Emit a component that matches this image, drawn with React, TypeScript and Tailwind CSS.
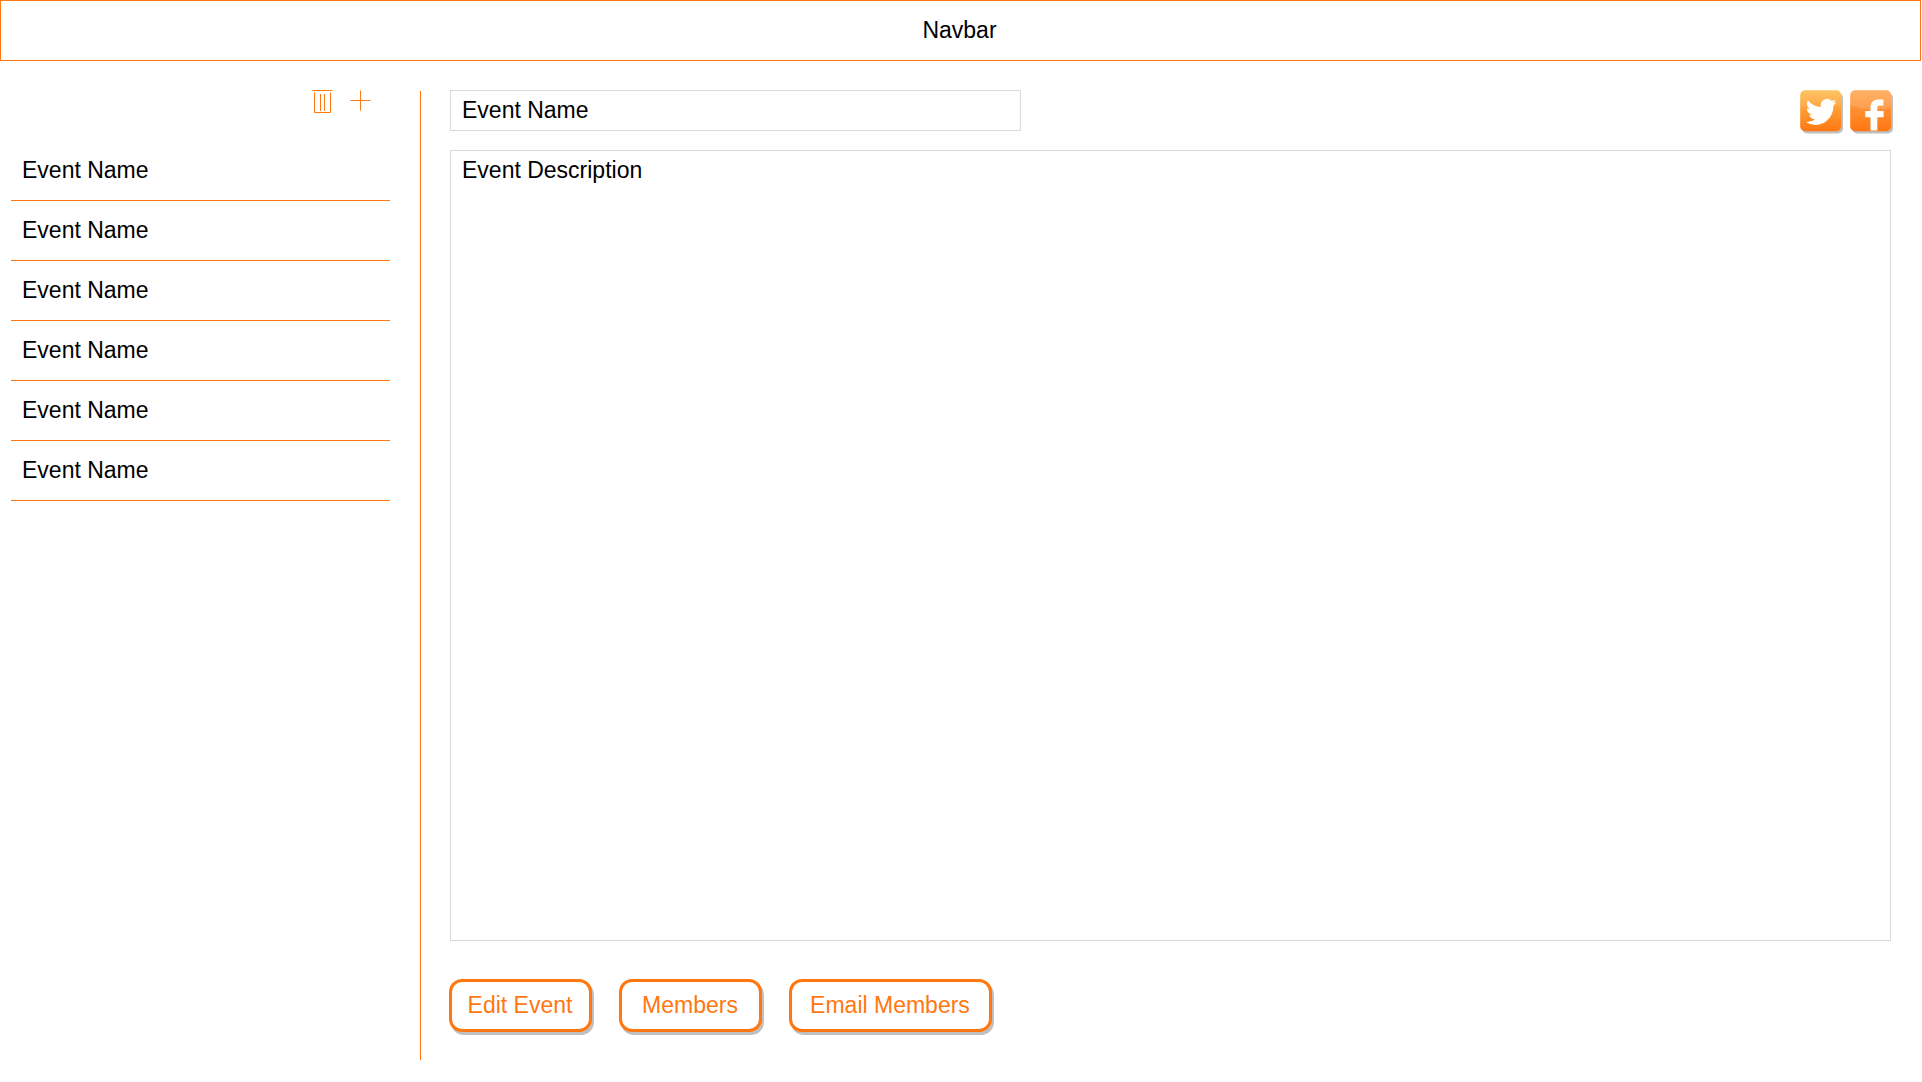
import React from "react";

const events = ["Event Name", "Event Name", "Event Name", "Event Name", "Event Name", "Event Name"];

function TrashIcon() {
  return (
    <svg width="22" height="24" viewBox="0 0 22 24" fill="none" stroke="#ff7711" strokeWidth="1">
      <path d="M0.5 0.5H20.5M2.5 2.5V22.5H18.5V2.5M8.5 4V21M12.5 4V21" />
    </svg>
  );
}

function PlusIcon() {
  return (
    <svg width="21" height="21" viewBox="0 0 21 21" fill="none" stroke="#ff7711" strokeWidth="1">
      <path d="M0.5 10.5H20.5M10.5 0.5V20.5" />
    </svg>
  );
}

function TwitterIcon() {
  return (
    <svg width="44" height="44" viewBox="0 0 44 44">
      <defs>
        <linearGradient id="tw" x1="0" y1="0" x2="0" y2="1">
          <stop offset="0" stopColor="#ffbf55" />
          <stop offset="1" stopColor="#ff7711" />
        </linearGradient>
      </defs>
      <rect x="2" y="3" width="41" height="40.5" rx="5" fill="#c0c0c0" />
      <rect x="0.2" y="0.2" width="41" height="41" rx="5" fill="url(#tw)" />
      <path d="M0.2 16Q20 23 41.2 15V5Q41 0.2 36 0.2H5Q0.2 0.2 0.2 5Z" fill="#fff" opacity="0.08" />
      <g transform="translate(5.8 6) scale(1.28 1.33)">
        <path
          fill="#fff"
          d="M23.953 4.57a10 10 0 0 1-2.825.775 4.958 4.958 0 0 0 2.163-2.723 9.99 9.99 0 0 1-3.127 1.184 4.92 4.92 0 0 0-8.384 4.482C7.69 8.095 4.067 6.13 1.64 3.162a4.822 4.822 0 0 0-.666 2.475c0 1.71.87 3.213 2.188 4.096a4.904 4.904 0 0 1-2.228-.616v.06a4.923 4.923 0 0 0 3.946 4.827 4.996 4.996 0 0 1-2.212.085 4.936 4.936 0 0 0 4.604 3.417 9.867 9.867 0 0 1-6.102 2.105c-.39 0-.779-.023-1.17-.067a13.995 13.995 0 0 0 7.557 2.209c9.053 0 13.998-7.496 13.998-13.985 0-.21 0-.42-.015-.63A9.935 9.935 0 0 0 24 4.59z"
        />
      </g>
    </svg>
  );
}

function FacebookIcon() {
  return (
    <svg width="44" height="44" viewBox="0 0 44 44">
      <defs>
        <linearGradient id="fb" x1="0" y1="0" x2="0" y2="1">
          <stop offset="0" stopColor="#ffa44f" />
          <stop offset="1" stopColor="#ff7711" />
        </linearGradient>
      </defs>
      <rect x="2" y="3" width="41" height="40.5" rx="5" fill="#c0c0c0" />
      <rect x="0.2" y="0.2" width="41" height="41" rx="5" fill="url(#fb)" />
      <path d="M0.2 15Q20 23 41.2 17V5Q41 0.2 36 0.2H5Q0.2 0.2 0.2 5Z" fill="#fff" opacity="0.14" />
      <path
        fill="#fff"
        d="M20.5 40.5V27.2H15.3V21H20.5V18C20.5 12.2 23.4 9.4 28.4 9.4H33.4V15.6H29.8C27.6 15.6 27.3 16.8 27.3 18.6V21H33.6V27.2H27.3V40.5Z"
      />
    </svg>
  );
}

function ActionButton({ label, width }: { label: string; width: string }) {
  return (
    <button
      className={`h-[53px] rounded-[13px] border-[3px] border-[#ff7711] bg-white pr-px pb-[2px] leading-7 text-[#ff7711] shadow-[2px_3px_0_#c0c0c0] ${width}`}
    >
      {label}
    </button>
  );
}

export default function App() {
  return (
    <div className="h-[1082px] w-[1922px] overflow-hidden bg-white font-['Liberation_Sans',Arial,sans-serif] text-[23px] text-black">
      <nav className="flex h-[61px] w-[1921px] items-center justify-center border border-[#ff7711] pr-[2px]">
        Navbar
      </nav>
      <div className="flex pt-[29px]">
        <aside className="ml-[11px] w-[380px]">
          <div className="flex h-[51px] gap-[16px] pl-[301px]">
            <TrashIcon />
            <PlusIcon />
          </div>
          <ul className="w-[379px]">
            {events.map((name, i) => (
              <li key={i} className="flex h-[60px] items-center border-b border-[#ff7711] pl-[11px]">
                {name}
              </li>
            ))}
          </ul>
        </aside>
        <div className="ml-[29px] mt-px h-[969px] w-px bg-[#ff7711]" />
        <main className="ml-[29px] w-[1444px]">
          <div className="flex h-[60px] items-start justify-between">
            <div className="flex h-[41px] w-[571px] items-center border border-[#d9d9d9] pl-[11px]">
              Event Name
            </div>
            <div className="flex gap-[6px]">
              <TwitterIcon />
              <FacebookIcon />
            </div>
          </div>
          <div className="h-[791px] w-[1441px] border border-[#d9d9d9] pl-[11px] pt-[5px] leading-[29px]">
            Event Description
          </div>
          <div className="-ml-px mt-[38px] flex gap-[27px]">
            <ActionButton label="Edit Event" width="w-[143px]" />
            <ActionButton label="Members" width="w-[143px]" />
            <ActionButton label="Email Members" width="w-[203px]" />
          </div>
        </main>
      </div>
    </div>
  );
}
